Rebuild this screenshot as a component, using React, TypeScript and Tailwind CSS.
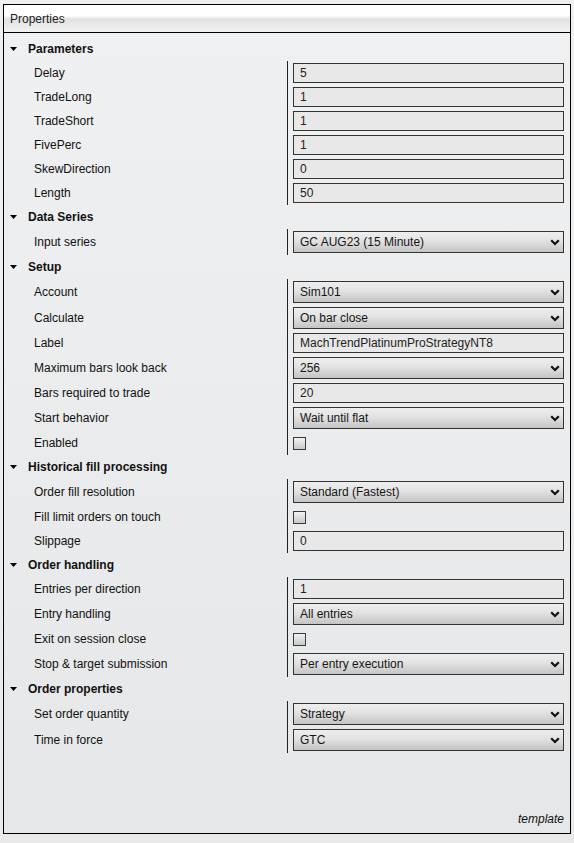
import React from "react";

type Row =
  | { kind: "text"; label: string; value: string }
  | { kind: "combo"; label: string; value: string }
  | { kind: "check"; label: string };

type Section = { title: string; rows: Row[] };

const sections: Section[] = [
  {
    title: "Parameters",
    rows: [
      { kind: "text", label: "Delay", value: "5" },
      { kind: "text", label: "TradeLong", value: "1" },
      { kind: "text", label: "TradeShort", value: "1" },
      { kind: "text", label: "FivePerc", value: "1" },
      { kind: "text", label: "SkewDirection", value: "0" },
      { kind: "text", label: "Length", value: "50" }
    ]
  },
  {
    title: "Data Series",
    rows: [{ kind: "combo", label: "Input series", value: "GC AUG23 (15 Minute)" }]
  },
  {
    title: "Setup",
    rows: [
      { kind: "combo", label: "Account", value: "Sim101" },
      { kind: "combo", label: "Calculate", value: "On bar close" },
      { kind: "text", label: "Label", value: "MachTrendPlatinumProStrategyNT8" },
      { kind: "combo", label: "Maximum bars look back", value: "256" },
      { kind: "text", label: "Bars required to trade", value: "20" },
      { kind: "combo", label: "Start behavior", value: "Wait until flat" },
      { kind: "check", label: "Enabled" }
    ]
  },
  {
    title: "Historical fill processing",
    rows: [
      { kind: "combo", label: "Order fill resolution", value: "Standard (Fastest)" },
      { kind: "check", label: "Fill limit orders on touch" },
      { kind: "text", label: "Slippage", value: "0" }
    ]
  },
  {
    title: "Order handling",
    rows: [
      { kind: "text", label: "Entries per direction", value: "1" },
      { kind: "combo", label: "Entry handling", value: "All entries" },
      { kind: "check", label: "Exit on session close" },
      { kind: "combo", label: "Stop & target submission", value: "Per entry execution" }
    ]
  },
  {
    title: "Order properties",
    rows: [
      { kind: "combo", label: "Set order quantity", value: "Strategy" },
      { kind: "combo", label: "Time in force", value: "GTC" }
    ]
  }
];

function Chevron() {
  return (
    <svg width="10" height="7" viewBox="0 0 10 7" className="shrink-0">
      <path d="M1.2 1.2 L5 5 L8.8 1.2" fill="none" stroke="#111" strokeWidth="2.2" />
    </svg>
  );
}

function Value({ row }: { row: Row }) {
  if (row.kind === "check") {
    return (
      <div className="h-[13px] w-[13px] border border-[#3a3a3a] bg-[linear-gradient(to_bottom,#f2f2f2,#c9c9c9)]" />
    );
  }
  if (row.kind === "combo") {
    return (
      <div className="flex h-[22px] w-full items-center justify-between border border-[#333] bg-[linear-gradient(to_bottom,#eeeeee_0%,#e2e2e2_45%,#c4c4c4_100%)] pl-[6px] pr-[3px] text-[#151515]">
        <span>{row.value}</span>
        <Chevron />
      </div>
    );
  }
  return (
    <div className="flex h-[20px] w-full items-center border border-[#333] bg-[#e8e8e8] pl-[6px] text-[#222]">
      {row.value}
    </div>
  );
}

export default function App() {
  return (
    <div className="h-[843px] w-[574px] bg-[linear-gradient(to_bottom,#f0f0f0,#e9e9e9)] pl-[3px] pt-1 font-['Liberation_Sans',Arial,sans-serif] text-[12px] leading-none">
      <div className="flex h-[830px] w-[568px] flex-col border border-black">
        <div className="flex h-[28px] items-center border-b border-black bg-[linear-gradient(to_bottom,#ffffff_0%,#ffffff_40%,#e2e2e2_52%,#f2f2f2_100%)] pl-[6px] text-[#222]">
          Properties
        </div>
        <div className="flex flex-1 flex-col bg-[linear-gradient(to_bottom,#eff0f1,#e6e7e8)] pt-1">
          {sections.map((section) => (
            <div key={section.title}>
              <div className="flex h-6 items-center pl-[6px] font-bold text-[#111]">
                <svg width="7" height="4" viewBox="0 0 7 4" className="mr-[11px]">
                  <polygon points="0,0 7,0 3.5,4" fill="#000" />
                </svg>
                {section.title}
              </div>
              {section.rows.map((row) => (
                <div
                  key={row.label}
                  className={`grid grid-cols-[283px_1fr] ${row.kind === "combo" ? "h-[26px]" : "h-6"}`}
                >
                  <div className="flex items-center pl-[30px] text-[#111]">{row.label}</div>
                  <div className="flex items-center border-l border-[#222] pl-[5px] pr-[6px]">
                    <Value row={row} />
                  </div>
                </div>
              ))}
            </div>
          ))}
          <div className="mt-auto flex justify-end pb-[8px] pr-[6px] italic text-[#111]">template</div>
        </div>
      </div>
    </div>
  );
}
